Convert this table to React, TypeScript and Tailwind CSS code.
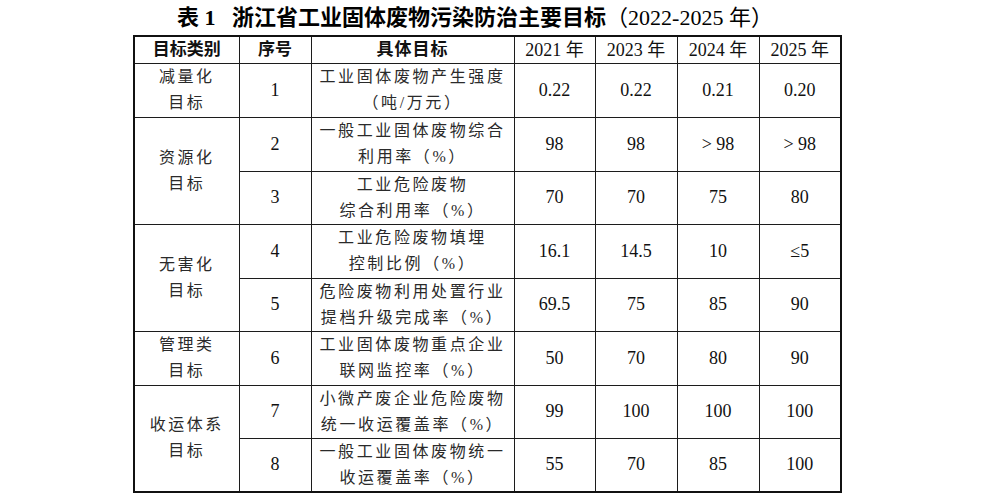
import React from 'react';

type Row = {
  no: string;
  lines: string[];
  values: string[];
  h: string;
};

type Group = {
  label: string[];
  rows: Row[];
};

const groups: Group[] = [
  {
    label: ['减量化', '目标'],
    rows: [{ no: '1', lines: ['工业固体废物产生强度', '（吨/万元）'], values: ['0.22', '0.22', '0.21', '0.20'], h: 'h-[54px]' }],
  },
  {
    label: ['资源化', '目标'],
    rows: [
      { no: '2', lines: ['一般工业固体废物综合', '利用率（%）'], values: ['98', '98', '> 98', '> 98'], h: 'h-[54px]' },
      { no: '3', lines: ['工业危险废物', '综合利用率（%）'], values: ['70', '70', '75', '80'], h: 'h-[52px]' },
    ],
  },
  {
    label: ['无害化', '目标'],
    rows: [
      { no: '4', lines: ['工业危险废物填埋', '控制比例（%）'], values: ['16.1', '14.5', '10', '≤5'], h: 'h-[54px]' },
      { no: '5', lines: ['危险废物利用处置行业', '提档升级完成率（%）'], values: ['69.5', '75', '85', '90'], h: 'h-[52px]' },
    ],
  },
  {
    label: ['管理类', '目标'],
    rows: [{ no: '6', lines: ['工业固体废物重点企业', '联网监控率（%）'], values: ['50', '70', '80', '90'], h: 'h-[54px]' }],
  },
  {
    label: ['收运体系', '目标'],
    rows: [
      { no: '7', lines: ['小微产废企业危险废物', '统一收运覆盖率（%）'], values: ['99', '100', '100', '100'], h: 'h-[53px]' },
      { no: '8', lines: ['一般工业固体废物统一', '收运覆盖率（%）'], values: ['55', '70', '85', '100'], h: 'h-[52px]' },
    ],
  },
];

const years = ['2021', '2023', '2024', '2025'];

const cell = 'border border-[#1c1c1c] p-0 text-center align-middle';

export default function App() {
  return (
    <div className="w-[1000px] h-[500px] bg-white text-[#111] font-['Liberation_Serif','Noto_Sans_CJK_SC',serif]">
      <div className="ml-[133px] w-[707px]">
        <div className="h-[35px] flex items-center justify-center pr-[23px] text-[22px] text-black whitespace-pre">
          <span className="font-bold">{'表 1   浙江省工业固体废物污染防治主要目标'}</span>
          <span className="font-normal">{'（2022-2025 年）'}</span>
        </div>
        <table className="w-[707px] table-fixed border-collapse border-2 border-[#111]">
          <colgroup>
            <col className="w-[105px]" />
            <col className="w-[72px]" />
            <col className="w-[203px]" />
            <col className="w-[81px]" />
            <col className="w-[82px]" />
            <col className="w-[82px]" />
            <col className="w-[82px]" />
          </colgroup>
          <thead>
            <tr className="h-[27px] text-[17px] leading-none">
              <th className={`${cell} font-semibold`}>目标类别</th>
              <th className={`${cell} font-semibold`}>序号</th>
              <th className={`${cell} font-semibold tracking-[1px]`}>具体目标</th>
              {years.map((y) => (
                <th key={y} className={`${cell} font-normal text-[18px]`}>
                  {y} 年
                </th>
              ))}
            </tr>
          </thead>
          <tbody>
            {groups.map((g) =>
              g.rows.map((r, i) => (
                <tr key={r.no} className={r.h}>
                  {i === 0 && (
                    <td rowSpan={g.rows.length} className={`${cell} text-[16px] leading-[26px] tracking-[2.5px] text-[#2a2a2a]`}>
                      {g.label.map((l) => (
                        <div key={l}>{l}</div>
                      ))}
                    </td>
                  )}
                  <td className={`${cell} text-[18px]`}>{r.no}</td>
                  <td className={`${cell} text-[16px] leading-[26px] tracking-[2.6px] text-[#2a2a2a]`}>
                    {r.lines.map((l) => (
                      <div key={l}>{l}</div>
                    ))}
                  </td>
                  {r.values.map((v, k) => (
                    <td key={k} className={`${cell} text-[18px]`}>
                      {v}
                    </td>
                  ))}
                </tr>
              ))
            )}
          </tbody>
        </table>
      </div>
    </div>
  );
}
